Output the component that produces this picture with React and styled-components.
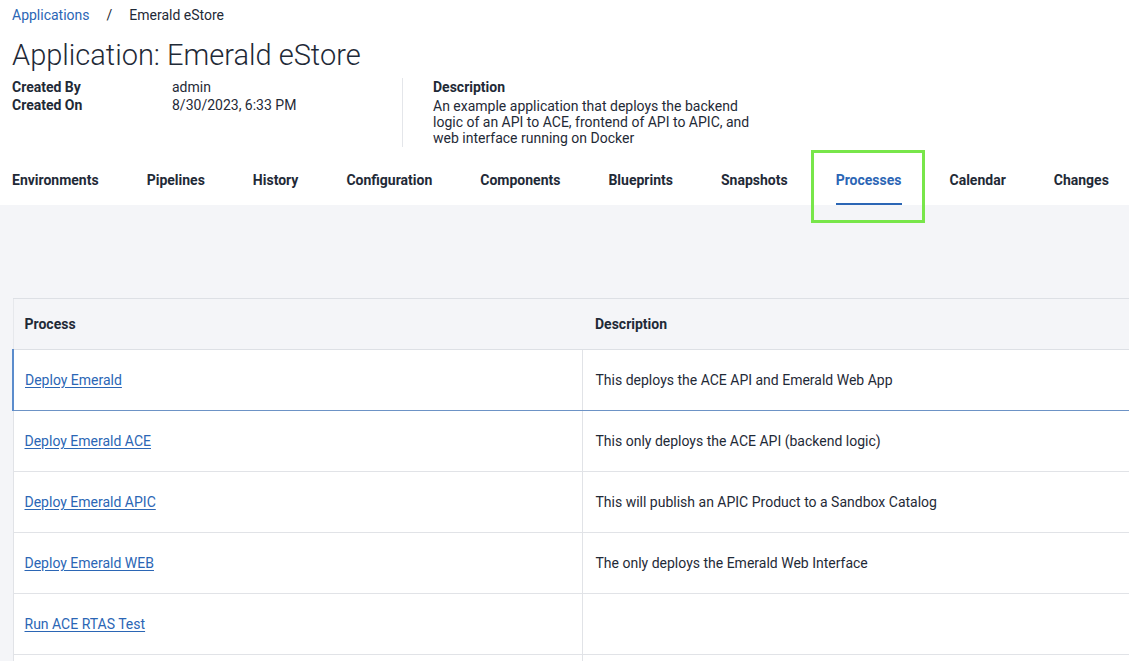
import React from 'react';
import styled, { createGlobalStyle } from 'styled-components';

/* ============ Styles ============ */

const GlobalStyle = createGlobalStyle`
  html, body {
    margin: 0;
    padding: 0;
    background: #f4f5f8;
    font-family: Roboto, "Liberation Sans", sans-serif;
    color: #1f2a37;
    overflow: hidden;
  }
`;

const Page = styled.div`
  min-height: 661px;
  display: flex;
  flex-direction: column;
`;

const Header = styled.header`
  background: #ffffff;
  padding: 0 12px;
`;

const Breadcrumb = styled.nav`
  display: flex;
  align-items: center;
  gap: 17px;
  height: 30px;
  font-size: 14px;
`;

const Crumb = styled.a`
  color: ${p => (p.$current ? '#1f2a37' : '#2b66b5')};
  text-decoration: none;
`;

const Slash = styled.span`
  color: #1f2a37;
`;

const Title = styled.h1`
  margin: 8px 0 0 0;
  font-size: 29px;
  font-weight: 300;
  line-height: 34px;
  color: #1f2a37;
`;

const Summary = styled.section`
  display: flex;
  align-items: flex-start;
  margin-top: 6px;
`;

const MetaBlock = styled.dl`
  margin: 0;
  width: 390px;
  display: grid;
  grid-template-columns: 160px 1fr;
  font-size: 14px;
  line-height: 18px;
  border-right: 1px solid #e4e6ea;
  padding-bottom: 33px;
`;

const MetaLabel = styled.dt`
  font-weight: 700;
`;

const MetaValue = styled.dd`
  margin: 0;
`;

const DescBlock = styled.div`
  padding-left: 30px;
  width: 330px;
  font-size: 14px;
`;

const DescLabel = styled.div`
  font-weight: 700;
  line-height: 18px;
  margin-bottom: 2px;
`;

const DescText = styled.p`
  margin: 0;
  line-height: 16px;
`;

const Tabs = styled.div`
  display: flex;
  gap: 48px;
  height: 50px;
  margin-top: 8px;
`;

const Tab = styled.div`
  position: relative;
  display: flex;
  align-items: center;
  font-size: 14px;
  font-weight: 700;
  white-space: nowrap;
  color: ${p => (p.$active ? '#2b66b5' : '#1f2a37')};
  border-bottom: 2px solid ${p => (p.$active ? '#2b66b5' : 'transparent')};
  box-sizing: border-box;
  padding-top: 2px;
`;

const Highlight = styled.span`
  position: absolute;
  left: -25px;
  right: -23px;
  top: -5px;
  bottom: -20px;
  border: 3px solid #78e64a;
  pointer-events: none;
`;

const Body = styled.main`
  flex: 1;
  padding: 93px 0 0 12px;
  overflow: hidden;
`;

const Table = styled.table`
  width: 1140px;
  border-collapse: collapse;
  table-layout: fixed;
  font-size: 14px;
`;

const HeadCell = styled.th`
  height: 50px;
  text-align: left;
  font-weight: 700;
  padding: 0 12px 0 11px;
  background: #f4f5f8;
  border-top: 1px solid #dde0e5;
  border-bottom: 1px solid #dde0e5;
  &:first-child {
    border-left: 1px solid #e6e8ec;
  }
  & + & {
    padding-left: 13px;
  }
`;

const Row = styled.tr`
  background: #ffffff;
  height: 61px;
  & > td {
    border-bottom: 1px solid ${p => (p.$selected ? '#6d93c6' : '#e1e3e7')};
  }
  & > td:first-child {
    border-left: ${p => (p.$selected ? '2px solid #5b8ccc' : '1px solid #e1e3e7')};
  }
`;

const Cell = styled.td`
  padding: 0 12px 0 11px;
  vertical-align: middle;
  & + & {
    border-left: 1px solid #e1e3e7;
    padding-left: 13px;
  }
`;

const ProcessLink = styled.a`
  color: #2b66b5;
  text-decoration: underline;
  text-underline-offset: 2px;
`;

/* ============ End Styles ============ */

const tabs = [
  'Environments', 'Pipelines', 'History', 'Configuration', 'Components',
  'Blueprints', 'Snapshots', 'Processes', 'Calendar', 'Changes',
];

const processes = [
  { name: 'Deploy Emerald', desc: 'This deploys the ACE API and Emerald Web App' },
  { name: 'Deploy Emerald ACE', desc: 'This only deploys the ACE API (backend logic)' },
  { name: 'Deploy Emerald APIC', desc: 'This will publish an APIC Product to a Sandbox Catalog' },
  { name: 'Deploy Emerald WEB', desc: 'The only deploys the Emerald Web Interface' },
  { name: 'Run ACE RTAS Test', desc: '' },
  { name: '', desc: '' },
];

function App() {
  return (
    <Page>
      <GlobalStyle />
      <Header>
        <Breadcrumb>
          <Crumb href="#">Applications</Crumb>
          <Slash>/</Slash>
          <Crumb $current>Emerald eStore</Crumb>
        </Breadcrumb>
        <Title>Application: Emerald eStore</Title>

        <Summary>
          <MetaBlock>
            <MetaLabel>Created By</MetaLabel>
            <MetaValue>admin</MetaValue>
            <MetaLabel>Created On</MetaLabel>
            <MetaValue>8/30/2023, 6:33 PM</MetaValue>
          </MetaBlock>
          <DescBlock>
            <DescLabel>Description</DescLabel>
            <DescText>
              An example application that deploys the backend logic of an API to ACE,
              frontend of API to APIC, and web interface running on Docker
            </DescText>
          </DescBlock>
        </Summary>

        <Tabs>
          {tabs.map(t => (
            <Tab key={t} $active={t === 'Processes'}>
              {t}
              {t === 'Processes' && <Highlight />}
            </Tab>
          ))}
        </Tabs>
      </Header>

      <Body>
        <Table>
          <colgroup>
            <col style={{ width: 569 }} />
            <col />
          </colgroup>
          <thead>
            <tr>
              <HeadCell>Process</HeadCell>
              <HeadCell>Description</HeadCell>
            </tr>
          </thead>
          <tbody>
            {processes.map((p, i) => (
              <Row key={i} $selected={i === 0}>
                <Cell>{p.name && <ProcessLink href="#">{p.name}</ProcessLink>}</Cell>
                <Cell>{p.desc}</Cell>
              </Row>
            ))}
          </tbody>
        </Table>
      </Body>
    </Page>
  );
}

export default App;
